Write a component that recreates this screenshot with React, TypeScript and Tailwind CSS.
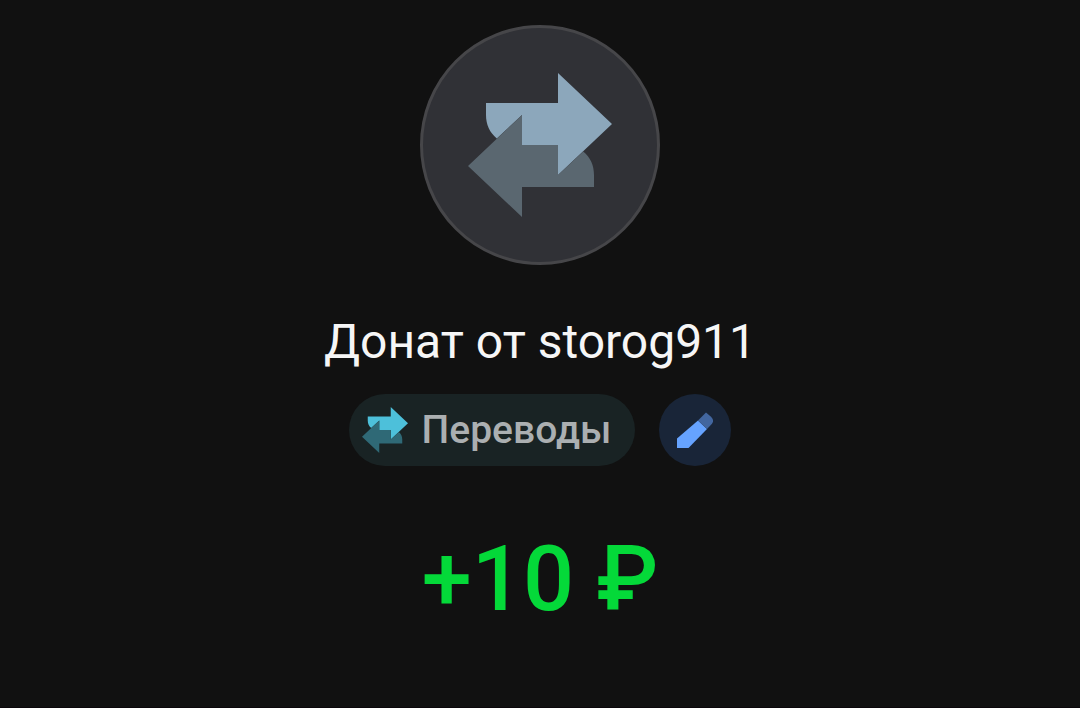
interface TransferIconProps {
  className?: string;
  front: string;
  back: string;
}

const TransferIcon = ({ className, front, back }: TransferIconProps) => (
  <svg viewBox="0 0 24 24" className={className} aria-hidden="true">
    <path className={front} d="M3 5H15V0L24 8.5L15 17V12H9V7L4.8 10.9C3.6 9.9 3 8.6 3 7Z" />
    <path className={back} d="M21 19H9V24L0 15.5L9 7V12H15V17L19.2 13.1C20.4 14.1 21 15.4 21 17Z" />
  </svg>
);

const PencilIcon = ({ className }: { className?: string }) => (
  <svg viewBox="0 0 36 36" className={className} aria-hidden="true">
    <path fill="#66a3ff" d="M0 26.5L21 8.5L30 17L11.5 36H0Z" />
    <path fill="#42669f" d="M21 8.5L29 0.5L34 4.7Q37.5 8 35 11.7L30 17Z" />
  </svg>
);

export default function App() {
  return (
    <main className="flex min-h-screen flex-col items-center border-b border-[#0b070b] bg-[#111111] px-6 pt-[25px] pb-16 font-['Roboto',sans-serif]">
      <div className="flex size-60 items-center justify-center rounded-full border-3 border-[#464649] bg-[#303136]">
        <TransferIcon className="size-36" front="fill-[#8ca7bb]" back="fill-[#5a6770]" />
      </div>

      <h1 className="mt-12 text-center text-[48px] leading-[58px] font-normal text-[#f6f6f6]">
        Донат от storog911
      </h1>

      <div className="mt-[23px] flex items-center gap-6">
        <button
          type="button"
          className="flex h-18 items-center gap-3.5 rounded-full bg-[#192324] pr-6 pl-[13px] text-[39px] leading-10 font-medium text-[#abafb1]"
        >
          <TransferIcon className="size-[46px]" front="fill-[#4dc0da]" back="fill-[#2f6976]" />
          Переводы
        </button>
        <button
          type="button"
          aria-label="Изменить категорию"
          className="flex size-18 items-center justify-center rounded-full bg-[#192538]"
        >
          <PencilIcon className="size-9" />
        </button>
      </div>

      <p className="mt-[61px] text-[90px] leading-[106px] font-medium text-[#04d939]">+10 ₽</p>
    </main>
  );
}
